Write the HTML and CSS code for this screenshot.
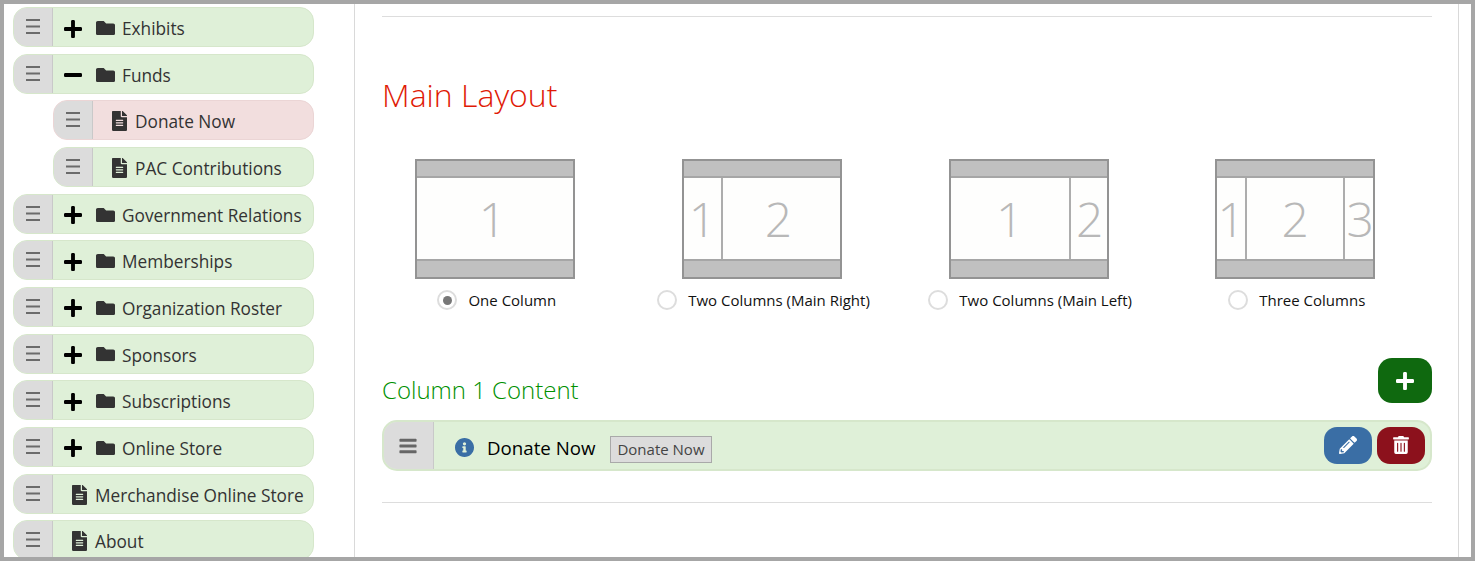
FILE: index.html
```html
<!DOCTYPE html>
<html lang="en">
<head>
<meta charset="utf-8">
<title>Main Layout</title>
<link rel="stylesheet" href="styles.css">
</head>
<body>
<svg class="defs" width="0" height="0" aria-hidden="true">
<symbol id="i-plus" viewBox="0 32 448 448"><path d="M416 208H272V64c0-17.670-14.330-32-32-32h-32c-17.670 0-32 14.330-32 32v144H32c-17.670 0-32 14.330-32 32v32c0 17.670 14.330 32 32 32h144v144c0 17.670 14.330 32 32 32h32c17.670 0 32-14.330 32-32V304h144c17.670 0 32-14.330 32-32v-32c0-17.670-14.330-32-32-32z"/></symbol>
<symbol id="i-minus" viewBox="0 32 448 448"><path d="M416 208H32c-17.670 0-32 14.330-32 32v32c0 17.670 14.330 32 32 32h384c17.670 0 32-14.330 32-32v-32c0-17.670-14.330-32-32-32z"/></symbol>
<symbol id="i-folder" viewBox="0 64 512 384"><path d="M464 128H272l-64-64H48C21.490 64 0 85.490 0 112v288c0 26.510 21.490 48 48 48h416c26.510 0 48-21.490 48-48V176c0-26.510-21.490-48-48-48z"/></symbol>
<symbol id="i-file" viewBox="0 0 384 512"><path d="M224 136V0H24C10.700 0 0 10.700 0 24v464c0 13.300 10.700 24 24 24h336c13.300 0 24-10.700 24-24V160H248c-13.200 0-24-10.800-24-24zm64 236c0 6.600-5.400 12-12 12H108c-6.600 0-12-5.400-12-12v-8c0-6.600 5.400-12 12-12h168c6.600 0 12 5.400 12 12v8zm0-64c0 6.600-5.400 12-12 12H108c-6.600 0-12-5.400-12-12v-8c0-6.600 5.400-12 12-12h168c6.600 0 12 5.400 12 12v8zm0-72v8c0 6.600-5.400 12-12 12H108c-6.600 0-12-5.400-12-12v-8c0-6.600 5.400-12 12-12h168c6.600 0 12 5.400 12 12zm96-114.100v6.100H256V0h6.100c6.400 0 12.500 2.500 17 7l97.900 98c4.500 4.500 7 10.600 7 16.900z"/></symbol>
<symbol id="i-bars" viewBox="0 0 1792 1792"><path d="M1664 1344v128q0 26-19 45t-45 19h-1408q-26 0-45-19t-19-45v-128q0-26 19-45t45-19h1408q26 0 45 19t19 45zm0-512v128q0 26-19 45t-45 19h-1408q-26 0-45-19t-19-45v-128q0-26 19-45t45-19h1408q26 0 45 19t19 45zm0-512v128q0 26-19 45t-45 19h-1408q-26 0-45-19t-19-45v-128q0-26 19-45t45-19h1408q26 0 45 19t19 45z"/></symbol>
<symbol id="i-thin" viewBox="0 0 14 15"><path d="M0 0h14v2H0zM0 6.500h14v2H0zM0 13h14v2H0z"/></symbol>
<symbol id="i-info" viewBox="8 8 496 496"><path d="M256 8C119.043 8 8 119.083 8 256c0 136.997 111.043 248 248 248s248-111.003 248-248C504 119.083 392.957 8 256 8zm0 110c23.196 0 42 18.804 42 42s-18.804 42-42 42-42-18.804-42-42 18.804-42 42-42zm56 254c0 6.627-5.373 12-12 12h-88c-6.627 0-12-5.373-12-12v-24c0-6.627 5.373-12 12-12h12v-64h-12c-6.627 0-12-5.373-12-12v-24c0-6.627 5.373-12 12-12h64c6.627 0 12 5.373 12 12v100h12c6.627 0 12 5.373 12 12v24z"/></symbol>
<symbol id="i-pencil" viewBox="0 0 512 512"><path d="M497.900 142.100l-46.100 46.100c-4.700 4.700-12.300 4.700-17 0l-111-111c-4.700-4.700-4.700-12.300 0-17l46.100-46.100c18.700-18.700 49.100-18.700 67.900 0l60.100 60.100c18.800 18.700 18.800 49.100 0 67.900zM284.200 99.800L21.600 362.400.400 483.900c-2.900 16.400 11.400 30.600 27.800 27.800l121.500-21.300 262.600-262.600c4.700-4.700 4.700-12.300 0-17l-111-111c-4.800-4.700-12.400-4.700-17.100 0zM124.100 339.900c-5.500-5.500-5.500-14.300 0-19.800l154-154c5.500-5.500 14.300-5.500 19.800 0s5.500 14.300 0 19.800l-154 154c-5.500 5.500-14.300 5.500-19.800 0zM88 424h48v36.300l-64.500 11.300-31.100-31.100L51.700 376H88v48z"/></symbol>
<symbol id="i-trash" viewBox="0 0 448 512"><path d="M32 464a48 48 0 0 0 48 48h288a48 48 0 0 0 48-48V128H32zm272-256a16 16 0 0 1 32 0v224a16 16 0 0 1-32 0zm-96 0a16 16 0 0 1 32 0v224a16 16 0 0 1-32 0zm-96 0a16 16 0 0 1 32 0v224a16 16 0 0 1-32 0zM432 32H312l-9.400-18.700A24 24 0 0 0 281.100 0H166.800a23.720 23.720 0 0 0-21.400 13.300L136 32H16A16 16 0 0 0 0 48v32a16 16 0 0 0 16 16h416a16 16 0 0 0 16-16V48a16 16 0 0 0-16-16z"/></symbol>
</svg>
<div class="frame">
  <aside class="sidebar">
    <div class="tree-row"><span class="handle"><svg class="ic-thin"><use href="#i-thin"/></svg></span><span class="body"><svg class="ic-toggle"><use href="#i-plus"/></svg><svg class="ic-folder"><use href="#i-folder"/></svg><span class="name">Exhibits</span></span></div>
    <div class="tree-row"><span class="handle"><svg class="ic-thin"><use href="#i-thin"/></svg></span><span class="body"><svg class="ic-toggle"><use href="#i-minus"/></svg><svg class="ic-folder"><use href="#i-folder"/></svg><span class="name">Funds</span></span></div>
    <div class="tree-row child active"><span class="handle"><svg class="ic-thin"><use href="#i-thin"/></svg></span><span class="body page"><svg class="ic-file"><use href="#i-file"/></svg><span class="name">Donate Now</span></span></div>
    <div class="tree-row child"><span class="handle"><svg class="ic-thin"><use href="#i-thin"/></svg></span><span class="body page"><svg class="ic-file"><use href="#i-file"/></svg><span class="name">PAC Contributions</span></span></div>
    <div class="tree-row"><span class="handle"><svg class="ic-thin"><use href="#i-thin"/></svg></span><span class="body"><svg class="ic-toggle"><use href="#i-plus"/></svg><svg class="ic-folder"><use href="#i-folder"/></svg><span class="name">Government Relations</span></span></div>
    <div class="tree-row"><span class="handle"><svg class="ic-thin"><use href="#i-thin"/></svg></span><span class="body"><svg class="ic-toggle"><use href="#i-plus"/></svg><svg class="ic-folder"><use href="#i-folder"/></svg><span class="name">Memberships</span></span></div>
    <div class="tree-row"><span class="handle"><svg class="ic-thin"><use href="#i-thin"/></svg></span><span class="body"><svg class="ic-toggle"><use href="#i-plus"/></svg><svg class="ic-folder"><use href="#i-folder"/></svg><span class="name">Organization Roster</span></span></div>
    <div class="tree-row"><span class="handle"><svg class="ic-thin"><use href="#i-thin"/></svg></span><span class="body"><svg class="ic-toggle"><use href="#i-plus"/></svg><svg class="ic-folder"><use href="#i-folder"/></svg><span class="name">Sponsors</span></span></div>
    <div class="tree-row"><span class="handle"><svg class="ic-thin"><use href="#i-thin"/></svg></span><span class="body"><svg class="ic-toggle"><use href="#i-plus"/></svg><svg class="ic-folder"><use href="#i-folder"/></svg><span class="name">Subscriptions</span></span></div>
    <div class="tree-row"><span class="handle"><svg class="ic-thin"><use href="#i-thin"/></svg></span><span class="body"><svg class="ic-toggle"><use href="#i-plus"/></svg><svg class="ic-folder"><use href="#i-folder"/></svg><span class="name">Online Store</span></span></div>
    <div class="tree-row"><span class="handle"><svg class="ic-thin"><use href="#i-thin"/></svg></span><span class="body page"><svg class="ic-file"><use href="#i-file"/></svg><span class="name">Merchandise Online Store</span></span></div>
    <div class="tree-row"><span class="handle"><svg class="ic-thin"><use href="#i-thin"/></svg></span><span class="body page"><svg class="ic-file"><use href="#i-file"/></svg><span class="name">About</span></span></div>
  </aside>
  <main class="main">
    <hr class="rule rule-top">
    <h2 class="title">Main Layout</h2>
    <div class="layouts">
      <div class="layout">
        <div class="diagram"><div class="band top"></div><div class="cols"><div class="col grow off">1</div></div><div class="band"></div></div>
        <label class="choice"><span class="radio checked"></span>One Column</label>
      </div>
      <div class="layout">
        <div class="diagram"><div class="band top"></div><div class="cols"><div class="col side-l">1</div><div class="col grow off">2</div></div><div class="band"></div></div>
        <label class="choice"><span class="radio"></span>Two Columns (Main Right)</label>
      </div>
      <div class="layout">
        <div class="diagram"><div class="band top"></div><div class="cols"><div class="col grow">1</div><div class="col side-r">2</div></div><div class="band"></div></div>
        <label class="choice"><span class="radio"></span>Two Columns (Main Left)</label>
      </div>
      <div class="layout">
        <div class="diagram"><div class="band top"></div><div class="cols"><div class="col side-b">1</div><div class="col grow">2</div><div class="col side-c">3</div></div><div class="band"></div></div>
        <label class="choice"><span class="radio"></span>Three Columns</label>
      </div>
    </div>
    <div class="section-head">
      <h3 class="subtitle">Column 1 Content</h3>
      <button class="btn-add" type="button" aria-label="Add"><svg class="ic-add"><use href="#i-plus"/></svg></button>
    </div>
    <div class="content-row">
      <span class="content-handle"><svg class="ic-bars"><use href="#i-bars"/></svg></span>
      <svg class="ic-info"><use href="#i-info"/></svg>
      <span class="content-name">Donate Now</span>
      <span class="tag">Donate Now</span>
      <span class="actions">
        <button class="btn-act edit" type="button" aria-label="Edit"><svg class="ic-pencil"><use href="#i-pencil"/></svg></button>
        <button class="btn-act del" type="button" aria-label="Delete"><svg class="ic-trash"><use href="#i-trash"/></svg></button>
      </span>
    </div>
    <hr class="rule rule-bottom">
  </main>
</div>
</body>
</html>
```
FILE: styles.css
```css
* { box-sizing: border-box; }
html, body { margin: 0; height: 100%; overflow: hidden; background: #fff; }
body { font-family: "Open Sans", "Liberation Sans", sans-serif; color: #333; }
.defs { position: absolute; }
svg { display: block; fill: currentColor; flex: none; }

.frame {
  height: 561px;
  border: 4px solid #a6a6a6;
  display: flex;
  overflow: hidden;
}

.sidebar {
  width: 351px;
  flex: none;
  padding: 3px 40px 0 9px;
  border-right: 1px solid #d9d9d9;
  overflow: hidden;
}
.tree-row {
  height: 40px;
  margin-bottom: 6.67px;
  display: flex;
  border: 1px solid #d6e7cb;
  border-radius: 14px;
  background: #dff0d8;
  overflow: hidden;
}
.tree-row.child { margin-left: 40px; }
.tree-row.active { background: #f2dede; border-color: #ebd5d5; }
.handle {
  width: 39px;
  flex: none;
  background: #dcdcdc;
  border-right: 1px solid #c9c9c9;
  display: flex;
  justify-content: center;
  padding-top: 11px;
  color: #6b6b6b;
}
.ic-thin { width: 14px; height: 15px; }
.body { flex: 1; display: flex; align-items: center; min-width: 0; padding-left: 11px; white-space: nowrap; }
.body.page { padding-left: 18.5px; }
.name { font-size: 17.25px; line-height: 40px; color: #333; padding-top: 4px; }
.ic-toggle { width: 18px; height: 18px; color: #000; margin: 3px 14px 0 0; }
.ic-folder { width: 19px; height: 14.25px; color: #333; margin: 2px 7px 0 0; }
.ic-file { width: 15px; height: 20px; color: #333; margin: 2px 8.5px 0 0; }

.main {
  width: 1104px;
  flex: none;
  padding: 12px 26px 0 27px;
  border-right: 1px solid #d9d9d9;
}
.rule { margin: 0; border: 0; border-top: 1px solid #ddd; }
.title {
  margin: 51px 0 0;
  font-size: 32px;
  line-height: 54px;
  font-weight: 300;
  color: #e01a05;
}
.layouts {
  margin: 37px 0 0 -20px;
  display: grid;
  grid-template-columns: repeat(4, 266.67px);
}
.layout { display: flex; flex-direction: column; align-items: center; }
.diagram {
  width: 160px;
  height: 120px;
  border: 2px solid #939393;
  display: flex;
  flex-direction: column;
}
.band { height: 16px; flex: none; background: #c0c0c0; }
.band.top { height: 15px; }
.cols {
  flex: 1;
  display: flex;
  border-top: 2px solid #a6a6a6;
  border-bottom: 2px solid #a6a6a6;
  background: #fefefd;
}
.col {
  display: flex;
  align-items: center;
  justify-content: center;
  padding-top: 1px;
  font-size: 48px;
  font-weight: 300;
  line-height: 1;
  color: #b8b8b8;
  overflow: hidden;
}
.col + .col { border-left: 2px solid #adadad; }
.col.grow { flex: 1; }
.col.off { padding-right: 6px; }
.col.side-l { width: 37px; flex: none; }
.col.side-r { width: 38px; flex: none; padding-left: 2px; }
.col.side-b { width: 28px; flex: none; }
.col.side-c { width: 30px; flex: none; padding-left: 2px; }
.choice {
  margin-top: 10px;
  padding-left: 3px;
  display: flex;
  align-items: center;
  gap: 11px;
  height: 22px;
  font-size: 15px;
  color: #111;
  white-space: nowrap;
}
.radio {
  width: 20px;
  height: 20px;
  border-radius: 50%;
  border: 2px solid #ddd;
  background: #fff;
  display: flex;
  align-items: center;
  justify-content: center;
}
.radio.checked::after {
  content: "";
  width: 9px;
  height: 9px;
  border-radius: 50%;
  background: #777;
}

.section-head {
  margin-top: 47px;
  height: 45px;
  display: flex;
  justify-content: space-between;
}
.subtitle {
  margin: 14px 0 0;
  font-size: 24px;
  line-height: 36px;
  font-weight: 300;
  color: #009000;
}
.btn-add {
  width: 54px;
  height: 45px;
  border: 0;
  padding: 0;
  border-radius: 14px;
  background: #0f690f;
  color: #fff;
  display: flex;
  align-items: center;
  justify-content: center;
}
.ic-add { width: 18px; height: 18px; }

.content-row {
  margin-top: 17px;
  height: 51px;
  border: 2px solid #d6e7cb;
  border-radius: 15px;
  background: #dff0d8;
  display: flex;
  align-items: center;
  overflow: hidden;
}
.content-handle {
  width: 50px;
  height: 100%;
  flex: none;
  background: #dcdcdc;
  border-right: 1px solid #c9c9c9;
  display: flex;
  align-items: center;
  justify-content: center;
  padding-right: 2px;
  color: #666;
}
.ic-bars { width: 20px; height: 20px; }
.ic-info { width: 19px; height: 19px; margin: 4px 0 0 21px; color: #3a6ea5; }
.content-name { margin: 4px 0 0 13px; font-size: 18.7px; color: #000; }
.tag {
  margin: 8px 0 0 15px;
  height: 27px;
  padding: 0 6px;
  border: 1px solid #a9a9a9;
  background: #dcdcdc;
  font-size: 15px;
  line-height: 25px;
  color: #444;
}
.actions { margin-left: auto; margin-right: 5px; display: flex; gap: 5px; }
.btn-act {
  width: 48px;
  height: 37px;
  border: 0;
  padding: 0 0 2px;
  border-radius: 13px;
  color: #fff;
  display: flex;
  align-items: center;
  justify-content: center;
}
.btn-act.edit { background: #3a6ea5; }
.btn-act.del { background: #8c111c; }
.ic-pencil { width: 18px; height: 18px; }
.ic-trash { width: 16px; height: 18px; }
.rule-bottom { margin-top: 31px; }
```
